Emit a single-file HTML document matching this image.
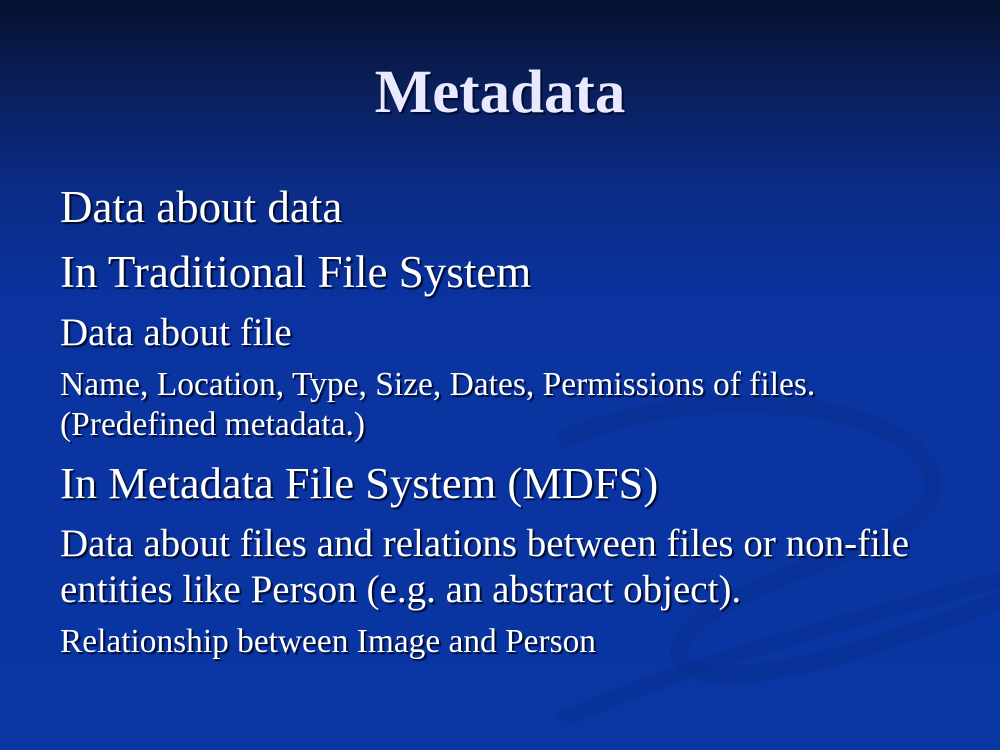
<!DOCTYPE html>
<html><head><meta charset="utf-8"><style>
html,body{margin:0;padding:0}
body{width:1000px;height:750px;overflow:hidden;position:relative;
background:linear-gradient(180deg,#06112e 0%,#0a1f5c 12%,#0b2c86 25%,#0a33a0 40%,#0936a2 100%);
font-family:"Liberation Serif",serif;color:#fff}
.t{position:absolute;white-space:nowrap;line-height:1;text-shadow:2px 2px 1px #000b30}
</style></head><body>
<svg width="1000" height="750" style="position:absolute;left:0;top:0" viewBox="0 0 1000 750">
<path d="M560 440 C700 380 900 400 930 470 C960 540 780 560 700 620 C640 670 700 720 1000 600" fill="none" stroke="#08308f" stroke-width="18" opacity=".4"/>
<path d="M560 720 C700 660 850 620 1000 580" fill="none" stroke="#08308f" stroke-width="16" opacity=".4"/>
</svg>
<div class="t" style="left:0;width:1000px;text-align:center;top:62px;font-size:61px;font-weight:bold;color:#e8e8ff">Metadata</div>
<div class="t" style="left:60px;top:185px;font-size:45px">Data about data</div>
<div class="t" style="left:60px;top:250px;font-size:45px">In Traditional File System</div>
<div class="t" style="left:60px;top:313px;font-size:39px">Data about file</div>
<div class="t" style="left:60px;top:368px;font-size:33.5px">Name, Location, Type, Size, Dates, Permissions of files.</div>
<div class="t" style="left:60px;top:408px;font-size:33.5px">(Predefined metadata.)</div>
<div class="t" style="left:60px;top:461px;font-size:44.5px">In Metadata File System (MDFS)</div>
<div class="t" style="left:60px;top:524px;font-size:39px">Data about files and relations between files or non-file</div>
<div class="t" style="left:60px;top:570px;font-size:39px">entities like Person (e.g. an abstract object).</div>
<div class="t" style="left:60px;top:625px;font-size:33.4px">Relationship between Image and Person</div>
</body></html>
